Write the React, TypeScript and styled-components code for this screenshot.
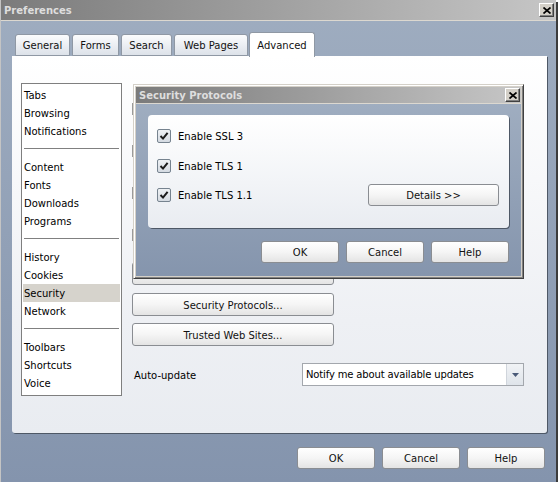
import styled, { createGlobalStyle } from 'styled-components';

const GlobalStyle = createGlobalStyle`
  html, body {
    margin: 0;
    padding: 0;
    background: #ffffff;
  }
  body {
    font-family: "DejaVu Sans", "Liberation Sans", sans-serif;
    font-size: 10px;
    color: #000;
  }
  * {
    box-sizing: border-box;
  }
`;

const Window = styled.div`
  position: relative;
  width: 556px;
  height: 482px;
  display: flex;
  flex-direction: column;
  background: linear-gradient(#9fadc0, #8494ad);
  border-left: 1px solid #c4c4c4;
  box-shadow: 2px 2px 0 #3c3c3c;
`;

const TitleBar = styled.div<{ $small?: boolean }>`
  height: ${(p) => (p.$small ? 17 : 21)}px;
  flex-shrink: 0;
  display: flex;
  align-items: center;
  justify-content: space-between;
  padding: 0 ${(p) => (p.$small ? 1 : 2)}px 0 3px;
  background: linear-gradient(90deg, #7b7b7b, #c6c6c6);
  border-bottom: 1px solid #dcd8d0;
  color: #dedede;
  font-weight: bold;
  font-size: 10px;
`;

const CloseButton = styled.div`
  width: 15px;
  height: 14px;
  display: flex;
  align-items: center;
  justify-content: center;
  background: #d4d0c8;
  border: 1px solid;
  border-color: #ffffff #404040 #404040 #ffffff;
  box-shadow: inset -1px -1px 0 #808080;
`;

const Body = styled.div`
  flex: 1;
  display: flex;
  flex-direction: column;
  padding: 11px 9px 0 11px;
`;

const TabRow = styled.div`
  height: 24px;
  display: flex;
  align-items: flex-end;
  gap: 2px;
  padding-left: 3px;
`;

const Tab = styled.div<{ $w: number; $active?: boolean }>`
  width: ${(p) => p.$w}px;
  height: ${(p) => (p.$active ? 25 : 22)}px;
  margin-left: ${(p) => (p.$active ? -1 : 0)}px;
  margin-bottom: ${(p) => (p.$active ? -1 : 0)}px;
  position: relative;
  z-index: ${(p) => (p.$active ? 1 : 0)};
  display: flex;
  align-items: center;
  justify-content: center;
  padding-top: 1px;
  border: 1px solid #8f98a4;
  border-bottom: ${(p) => (p.$active ? 'none' : '1px solid #8f98a4')};
  border-radius: 3px 3px 0 0;
  background: ${(p) =>
    p.$active ? '#ffffff' : 'linear-gradient(#fbfcfd, #e9ecf1 60%, #dde2e9)'};
  color: #111;
`;

const Panel = styled.div`
  height: 377px;
  display: flex;
  gap: 10px;
  padding: 27px 0 0 9px;
  background: linear-gradient(#ffffff, #eef0f4 70%, #e9ecf1);
  border-radius: 0 0 3px 3px;
  box-shadow: 1px 1px 0 #4e5866;
`;

const List = styled.div`
  width: 101px;
  height: 313px;
  display: flex;
  flex-direction: column;
  padding: 2px 1px;
  background: #ffffff;
  border: 1px solid #7f7f7f;
`;

const ListItem = styled.div<{ $selected?: boolean }>`
  height: 18px;
  line-height: 20px;
  padding-left: 1px;
  background: ${(p) => (p.$selected ? '#d6d3cc' : 'transparent')};
  white-space: nowrap;
`;

const ListSeparator = styled.div`
  height: 1px;
  margin: 8px 1px 9px;
  background: #808080;
`;

const Column = styled.div`
  width: 392px;
  display: flex;
  flex-direction: column;
`;

const GhostGroup = styled.div`
  display: flex;
  flex-direction: column;
  gap: 30px;
  padding-top: 20px;
`;

const GhostBox = styled.div`
  width: 12px;
  height: 12px;
  border: 1px solid #9a9a9a;
`;

const Button = styled.div<{ $w?: number; $h?: number; $mt?: number }>`
  width: ${(p) => (p.$w ? `${p.$w}px` : 'auto')};
  height: ${(p) => p.$h ?? 22}px;
  margin-top: ${(p) => p.$mt ?? 0}px;
  flex-shrink: 0;
  display: flex;
  align-items: center;
  justify-content: center;
  padding-top: 1px;
  border: 1px solid #8a8d92;
  border-radius: 3px;
  background: linear-gradient(#ffffff, #f5f5f5 50%, #e4e4e4);
  color: #111;
`;

const AutoRow = styled.div`
  margin-top: 17px;
  display: flex;
  align-items: center;
  justify-content: space-between;
`;

const AutoLabel = styled.span`
  padding: 1px 0 0 2px;
`;

const Select = styled.div`
  width: 222px;
  height: 23px;
  display: flex;
  border: 1px solid #a3a7ad;
  background: #ffffff;
`;

const SelectText = styled.div`
  flex: 1;
  padding-left: 3px;
  line-height: 22px;
  letter-spacing: -0.15px;
`;

const SelectArrow = styled.div`
  width: 17px;
  display: flex;
  align-items: center;
  justify-content: center;
  background: linear-gradient(#f1f3f6, #dfe4ea);
  border-left: 1px solid #d0d5dc;
`;

const Footer = styled.div`
  margin-top: 14px;
  display: flex;
  justify-content: flex-end;
  gap: 7px;
  padding-right: 2px;
`;

const Dialog = styled.div`
  position: absolute;
  left: 132px;
  top: 84px;
  width: 391px;
  height: 195px;
  display: flex;
  flex-direction: column;
  padding: 2px;
  background: #d4d0c8;
  border: 1px solid;
  border-color: #d4d0c8 #404040 #404040 #d4d0c8;
  box-shadow: inset 1px 1px 0 #ffffff, inset -1px -1px 0 #808080;
`;

const DialogBody = styled.div`
  flex: 1;
  display: flex;
  flex-direction: column;
  padding: 11px 12px 13px;
  background: linear-gradient(#9fadc0, #8595ad);
`;

const DialogPanel = styled.div`
  height: 113px;
  display: flex;
  flex-direction: column;
  gap: 7.5px;
  padding: 10px 10px 0 9px;
  background: linear-gradient(#ffffff, #f2f4f7 60%, #e9ecf1);
  border-radius: 4px;
  box-shadow: 1px 1px 0 #4e5866;
`;

const CheckRow = styled.div`
  height: 22px;
  display: flex;
  align-items: center;
  gap: 7px;
`;

const CheckLabel = styled.span`
  padding-top: 1px;
`;

const CheckBox = styled.div`
  width: 14px;
  height: 14px;
  display: flex;
  align-items: center;
  justify-content: center;
  border: 1px solid #76838f;
  border-radius: 2px;
  background: linear-gradient(#eef1f4, #d5dbe2);
`;

const DetailsButton = styled(Button)`
  margin-left: auto;
`;

const DialogFooter = styled.div`
  margin-top: 13px;
  display: flex;
  justify-content: flex-end;
  gap: 7px;
`;

function CloseIcon() {
  return (
    <svg width="8" height="7" viewBox="0 0 8 7">
      <path d="M0.5 0.5 L7.5 6.5 M7.5 0.5 L0.5 6.5" stroke="#000" strokeWidth="1.7" />
    </svg>
  );
}

function Check() {
  return (
    <svg width="10" height="10" viewBox="0 0 10 10">
      <path d="M1.5 5 L4 7.6 L8.6 1.8" fill="none" stroke="#1b1b1b" strokeWidth="2" />
    </svg>
  );
}

const groups = [
  ['Tabs', 'Browsing', 'Notifications'],
  ['Content', 'Fonts', 'Downloads', 'Programs'],
  ['History', 'Cookies', 'Security', 'Network'],
  ['Toolbars', 'Shortcuts', 'Voice'],
];

const tabs = [
  { label: 'General', w: 55 },
  { label: 'Forms', w: 47 },
  { label: 'Search', w: 51 },
  { label: 'Web Pages', w: 74 },
  { label: 'Advanced', w: 66, active: true },
];

const protocols = ['Enable SSL 3', 'Enable TLS 1', 'Enable TLS 1.1'];

export default function App() {
  return (
    <>
      <GlobalStyle />
      <Window>
        <TitleBar>
          <span>Preferences</span>
          <CloseButton>
            <CloseIcon />
          </CloseButton>
        </TitleBar>
        <Body>
          <TabRow>
            {tabs.map((t) => (
              <Tab key={t.label} $w={t.w} $active={t.active}>
                {t.label}
              </Tab>
            ))}
          </TabRow>
          <Panel>
            <List>
              {groups.map((g, i) => (
                <div key={i}>
                  {i > 0 && <ListSeparator />}
                  {g.map((item) => (
                    <ListItem key={item} $selected={item === 'Security'}>
                      {item}
                    </ListItem>
                  ))}
                </div>
              ))}
            </List>
            <Column>
              <GhostGroup>
                <GhostBox />
                <GhostBox />
                <GhostBox />
                <GhostBox />
              </GhostGroup>
              <Button $w={202} $h={23} $mt={21} />
              <Button $w={202} $h={23} $mt={8}>
                Security Protocols...
              </Button>
              <Button $w={202} $h={23} $mt={7}>
                Trusted Web Sites...
              </Button>
              <AutoRow>
                <AutoLabel>Auto-update</AutoLabel>
                <Select>
                  <SelectText>Notify me about available updates</SelectText>
                  <SelectArrow>
                    <svg width="7" height="4" viewBox="0 0 7 4">
                      <path d="M0 0 H7 L3.5 4 Z" fill="#4a5a78" />
                    </svg>
                  </SelectArrow>
                </Select>
              </AutoRow>
            </Column>
          </Panel>
          <Footer>
            <Button $w={78}>OK</Button>
            <Button $w={78}>Cancel</Button>
            <Button $w={78}>Help</Button>
          </Footer>
        </Body>

        <Dialog>
          <TitleBar $small>
            <span>Security Protocols</span>
            <CloseButton>
              <CloseIcon />
            </CloseButton>
          </TitleBar>
          <DialogBody>
            <DialogPanel>
              {protocols.map((p, i) => (
                <CheckRow key={p}>
                  <CheckBox>
                    <Check />
                  </CheckBox>
                  <CheckLabel>{p}</CheckLabel>
                  {i === protocols.length - 1 && (
                    <DetailsButton $w={131}>Details &gt;&gt;</DetailsButton>
                  )}
                </CheckRow>
              ))}
            </DialogPanel>
            <DialogFooter>
              <Button $w={78}>OK</Button>
              <Button $w={78}>Cancel</Button>
              <Button $w={78}>Help</Button>
            </DialogFooter>
          </DialogBody>
        </Dialog>
      </Window>
    </>
  );
}
